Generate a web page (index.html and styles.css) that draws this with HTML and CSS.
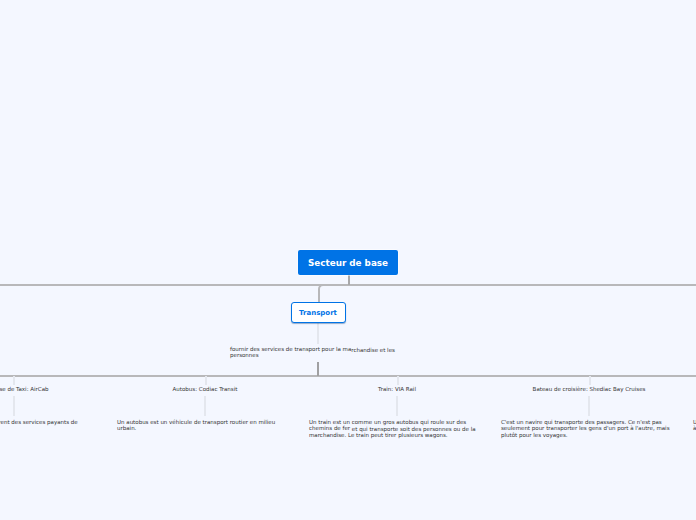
FILE: index.html
```html
<!DOCTYPE html>
<html lang="fr">
<head>
<meta charset="utf-8">
<title>Secteur de base</title>
<link rel="stylesheet" href="styles.css">
</head>
<body>
<main class="canvas">
  <i class="ln h trunk-h"></i>
  <i class="ln v root-stem"></i>
  <i class="ln corner"></i>
  <i class="ln v pale t-stem"></i>
  <i class="ln h bus"></i>
  <i class="ln v bus-stem"></i>
  <i class="ln v pale d1a"></i><i class="ln v pale d1b"></i>
  <i class="ln v pale d2a"></i><i class="ln v pale d2b"></i>
  <i class="ln v pale d3a"></i><i class="ln v pale d3b"></i>
  <i class="ln v pale d4a"></i><i class="ln v pale d4b"></i>

  <div class="root">Secteur de base</div>
  <div class="topic">Transport</div>
  <p class="txt goal">fournir des services de transport pour la ma<span class="seam">rchandise et les</span> personnes</p>

  <p class="txt head h1">Entreprise de Taxi: AirCab</p>
  <p class="txt body b1">Ces entreprises de taxi offrent des services payants de</p>
  <p class="txt head h2">Autobus: Codiac Transit</p>
  <p class="txt body b2">Un autobus est un véhicule de transport routier en milieu urbain.</p>
  <p class="txt head h3">Train: VIA Rail</p>
  <p class="txt body b3">Un train est un comme un gros autobus qui roule sur des chemins de fer <span class="seam">et qui transporte soit des personnes ou de la</span> marchandise. Le train peut tirer plusieurs wagons.</p>
  <p class="txt head h4">Bateau de croisière: Shediac Bay Cruises</p>
  <p class="txt body b4">C'est un navire qui transporte des passagers. Ce n'est pas seulement pour transporter les gens d'un port à l'autre, mais plutôt pour les voyages.</p>
  <p class="txt body b5">Un avion transporte des personnes et de la marchandise<br>à travers le monde.</p>
</main>
</body>
</html>
```
FILE: styles.css
```css
html, body { margin: 0; padding: 0; height: 100%; overflow: hidden; background: #f4f7ff; }
.canvas { position: relative; width: 696px; height: 520px; overflow: hidden; background: #f4f7ff; font-family: "DejaVu Sans", sans-serif; color: #333; }
.ln { position: absolute; display: block; }
.h { height: 2px; background: #b8b8ba; }
.v { width: 2px; background: #b8b8ba; }
.pale { background: #e4e7ee; }
.trunk-h { left: 0; top: 284px; width: 696px; }
.root-stem { left: 348px; top: 275px; height: 10px; background: #a8a8aa; }
.corner { left: 318px; top: 284px; width: 10px; height: 18px; box-sizing: border-box; border-left: 2px solid #b8b8ba; border-top: 2px solid #b8b8ba; border-top-left-radius: 5px; }
.t-stem { left: 317px; top: 323px; height: 21px; }
.bus { left: 0; top: 375px; width: 696px; }
.bus-stem { left: 317px; top: 362px; height: 14px; background: #a0a0a2; }
.d1a { left: 13px; top: 376px; height: 9px; }
.d1b { left: 13px; top: 396px; height: 20px; }
.d2a { left: 205px; top: 376px; height: 9px; }
.d2b { left: 204px; top: 396px; height: 20px; }
.d3a { left: 397px; top: 376px; height: 9px; }
.d3b { left: 396px; top: 396px; height: 20px; }
.d4a { left: 589px; top: 376px; height: 9px; }
.d4b { left: 588px; top: 396px; height: 20px; }
.root { position: absolute; left: 298px; top: 250px; width: 100px; height: 25px; box-sizing: border-box; display: flex; align-items: center; justify-content: center; background: #0073e6; border-radius: 2px; box-shadow: 0 0 0 .5px #fff; color: #fff; font-weight: 700; font-size: 8.8px; white-space: nowrap; }
.topic { position: absolute; left: 290.5px; top: 302px; width: 55px; height: 21px; box-sizing: border-box; display: flex; align-items: center; justify-content: center; background: #fff; border: 1.2px solid #0073e6; border-radius: 3px; box-shadow: 0 1px 1px rgba(0, 60, 130, .4); color: #0073e6; font-weight: 700; font-size: 7px; white-space: nowrap; }
.txt { position: absolute; margin: 0; font-size: 5.5px; line-height: 6.5px; color: #333; }
.seam { vertical-align: -0.8px; line-height: 0; }
.goal { left: 230px; top: 345.5px; width: 172px; }
.head { top: 385.5px; white-space: nowrap; transform: translateX(-50%); }
.h1 { left: 13px; }
.h2 { left: 205px; }
.h3 { left: 397px; }
.h4 { left: 589px; }
.body { top: 418.7px; width: 172px; }
.b1 { left: -74px; width: 162px; }
.b2 { left: 117px; }
.b3 { left: 309px; }
.b4 { left: 501px; }
.b5 { left: 693px; }
```
